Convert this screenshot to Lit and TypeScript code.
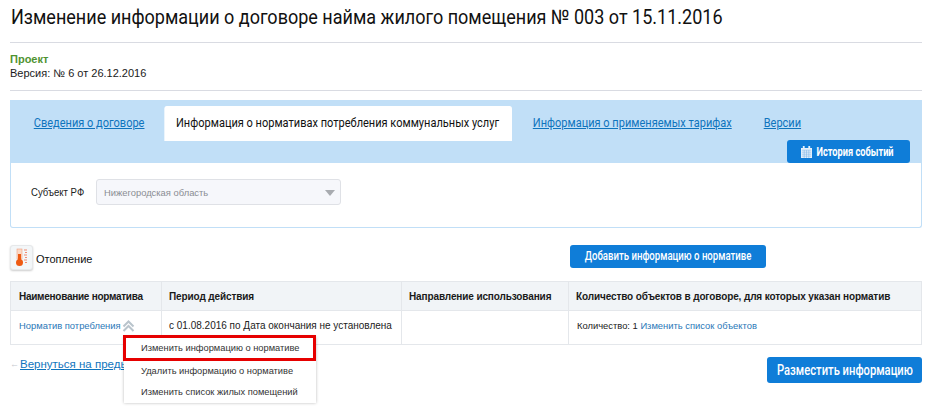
import { LitElement, html, css } from "lit";
import { customElement } from "lit/decorators.js";

@customElement("app-root")
export class AppRoot extends LitElement {
  static styles = css`
    :host { display: block; width: 930px; height: 410px; overflow: hidden; background: #fff; font-family: "Liberation Sans", Arial, sans-serif; color: #1a1a1a; font-size: 11px; }
    * { box-sizing: border-box; }
    .page { padding: 0 8px 0 10px; display: flex; flex-direction: column; }
    h1 { margin: 0; height: 43px; padding: 4px 0 0 1px; font: 400 20px/26px Roboto, sans-serif; color: #111; border-bottom: 1px solid #d9dbe2; white-space: nowrap; }
    h1 span { display: block; transform: scaleX(.901); transform-origin: left; }
    .meta { height: 48px; padding-top: 9px; border-bottom: 1px solid #d9dbe2; line-height: 14px; margin-bottom: 9px; }
    .status { font-weight: 700; color: #4f9331; }
    .panel { border: 1px solid #c1dff7; border-top: 0; height: 128px; border-radius: 0 0 3px 3px; }
    .head { background: #c1dff7; height: 63px; margin: 0 -1px; padding: 6px 12px 0 0; display: flex; flex-direction: column; }
    .tabs { display: flex; height: 35px; font: 400 13px/33px Roboto, sans-serif; transform: scaleX(.848); transform-origin: left; width: 1075px; }
    .tab { color: #0f74bd; text-decoration: underline; white-space: nowrap; }
    .t1 { margin: 0 23.6px 0 28px; }
    .active { background: #fff; color: #111; text-decoration: none; padding: 0 15px 0 13.6px; border-radius: 3px 3px 0 0; margin-right: 24.8px; }
    .t3 { margin-right: 37.7px; }
    .btn { background: #0f7dd8; color: #fff; border-radius: 3px; font-family: Roboto, sans-serif; font-weight: 500; display: flex; align-items: center; justify-content: center; white-space: nowrap; }
    .lbl { display: inline-block; transform: scaleX(.8); flex: none; }
    .hist { align-self: flex-end; width: 123px; height: 23px; margin-top: -1px; font-size: 12px; padding-left: 10px; font-weight: 700; }
    .hist .lbl { transform: scaleX(.77); }
    .hist svg { flex: none; margin-right: -7px; }
    .subject { display: flex; align-items: center; padding: 16px 0 0 20px; }
    .subject label { width: 65px; color: #222; white-space: nowrap; transform: scaleX(.87); transform-origin: left; }
    .select { width: 245px; height: 26px; background: #f6f7fb; border: 1px solid #dfe1e6; border-radius: 3px; display: flex; align-items: center; justify-content: space-between; padding: 0 5px 0 7px; color: #8a8d93; font-size: 9.4px; }
    .arrow { width: 0; height: 0; border-style: solid; border-color: #a8abb0 transparent transparent; border-width: 6px 5px 0; margin-top: 2px; }
    .section { display: flex; align-items: center; height: 26px; margin-top: 16px; }
    .ico { width: 23px; height: 25px; background: #f3f6f8; border: 1px solid #e6e8ea; border-radius: 3px; box-shadow: 0 1px 2px #0003; display: flex; align-items: center; justify-content: center; margin-right: 3px; }
    .add { width: 196px; height: 23px; font-size: 12px; margin-left: auto; margin-right: 156px; margin-top: -2px; }
    .sec-name { color: #111; padding-top: 3px; }
    table { border-collapse: collapse; width: 912px; margin-top: 11px; table-layout: fixed; }
    th, td { border: 1px solid #e4e7eb; text-align: left; padding: 0 8px; white-space: nowrap; }
    th { background: #f1f4f7; height: 29px; font-weight: 700; color: #1a1a1a; font-size: 10px; padding-left: 7px; letter-spacing: -0.12px; }
    th:first-child { padding-left: 8px; letter-spacing: -0.27px; }
    td { height: 34px; font-size: 10px; color: #222; padding-bottom: 4px; }
    .p { padding-left: 7px; }
    .s { font-size: 9.4px; }
    .link { color: #2a78b8; }
    .name { display: flex; align-items: center; gap: 1px; }
    .bottom { display: flex; justify-content: space-between; margin-top: 12px; }
    .back { font-size: 11.5px; display: flex; align-items: center; gap: 1px; height: 14px; }
    .back a { color: #0f74bd; text-decoration: underline; }
    .back span { color: #c5c9ce; font-size: 9px; }
    .post { width: 155px; height: 26px; font-size: 14px; }
    .menu { position: absolute; left: 124px; top: 337px; width: 192px; height: 66px; background: #fff; box-shadow: 0 0 3px #0004; display: flex; flex-direction: column; font-size: 9.3px; color: #333; }
    .item { height: 21px; padding-left: 17px; display: flex; align-items: center; white-space: nowrap; }
    .sel { height: 26px; margin: -2px 0 -1px -1px; padding-left: 15px; border: 3px solid #e60000; }
  `;

  render() {
    return html`
      <div class="page">
        <h1><span>Изменение информации о договоре найма жилого помещения № 003 от 15.11.2016</span></h1>
        <div class="meta"><div class="status">Проект</div><div>Версия: № 6 от 26.12.2016</div></div>
        <div class="panel">
          <div class="head">
            <div class="tabs">
              <a class="tab t1">Сведения о договоре</a>
              <a class="tab active">Информация о нормативах потребления коммунальных услуг</a>
              <a class="tab t3">Информация о применяемых тарифах</a>
              <a class="tab">Версии</a>
            </div>
            <div class="btn hist">
              <svg width="11" height="12" viewBox="0 0 12 13"><path fill="#e4f0fb" d="M0 2h2V0h2v2h4V0h2v2h2v11H0z"/><path stroke="#7fb6e8" stroke-width=".6" d="M1 4.500h10M1 6.700h10M1 8.900h10M1 11h10M3.500 4.500V13M6 4.500V13M8.500 4.500V13"/></svg>
              <span class="lbl">История событий</span>
            </div>
          </div>
          <div class="subject"><label>Субъект РФ</label><div class="select"><span>Нижегородская область</span><i class="arrow"></i></div></div>
        </div>
        <div class="section">
          <div class="ico">
            <svg width="15" height="19" viewBox="0 0 15 19"><rect x="3" y="1" width="5" height="10" fill="#fbd9c6" stroke="#f0a080" stroke-width=".6"/><rect x="4" y="6" width="3" height="7" fill="#ee5a12"/><circle cx="5.500" cy="14.500" r="3.500" fill="#ee5a12"/><path stroke="#f08a70" stroke-width="1" d="M10 2h3M11 4.500h2M10 7h3M11 9.500h2M10 12h3M11 14.500h2"/></svg>
          </div>
          <span class="sec-name">Отопление</span>
          <div class="btn add"><span class="lbl">Добавить информацию о нормативе</span></div>
        </div>
        <table>
          <colgroup><col style="width:151px"/><col style="width:240px"/><col style="width:167px"/><col/></colgroup>
          <tr><th>Наименование норматива</th><th>Период действия</th><th>Направление использования</th><th>Количество объектов в договоре, для которых указан норматив</th></tr>
          <tr>
            <td><div class="name"><span class="link s">Норматив потребления</span>
              <svg width="13" height="12" viewBox="0 0 13 12" fill="none" stroke="#b9c4cc" stroke-width="2"><path d="M1.500 6.500l5-5 5 5M1.500 11l5-5 5 5"/></svg></div></td>
            <td class="p">с 01.08.2016 по Дата окончания не установлена</td>
            <td></td>
            <td class="s">Количество: 1 <span class="link">Изменить список объектов</span></td>
          </tr>
        </table>
        <div class="bottom">
          <div class="back"><span>←</span><a>Вернуться на предыдущую страницу</a></div>
          <div class="btn post"><span class="lbl">Разместить информацию</span></div>
        </div>
      </div>
      <div class="menu">
        <div class="item sel">Изменить информацию о нормативе</div>
        <div class="item">Удалить информацию о нормативе</div>
        <div class="item">Изменить список жилых помещений</div>
      </div>
    `;
  }
}
